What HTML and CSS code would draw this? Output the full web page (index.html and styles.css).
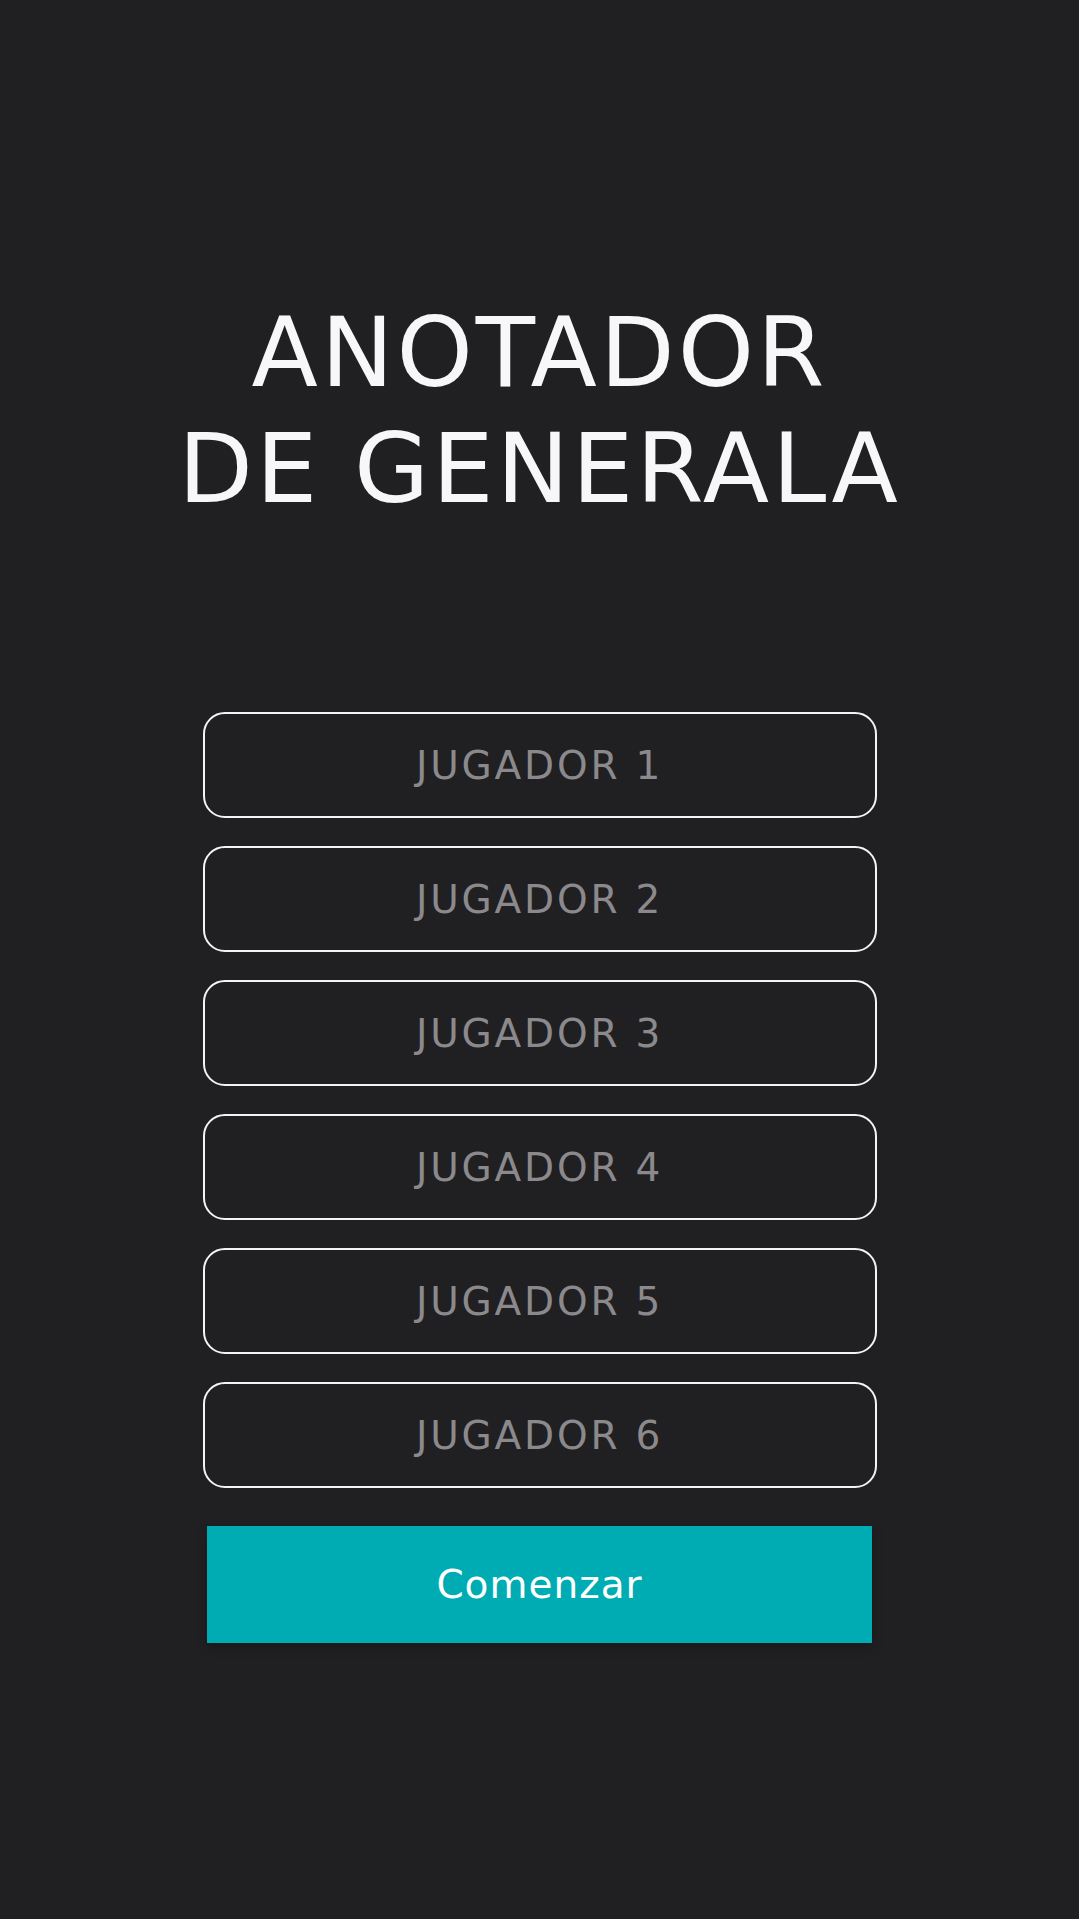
FILE: index.html
```html
<!DOCTYPE html>
<html lang="es">
<head>
    <meta charset="UTF-8">
    <title>Anotador de Generala</title>
    <link rel="stylesheet" href="styles.css">
</head>
<body>
    <div class="warp">
        <h1 class="title">ANOTADOR<br>DE GENERALA</h1>
        <form class="players">
            <input class="player" type="text" placeholder="JUGADOR 1">
            <input class="player" type="text" placeholder="JUGADOR 2">
            <input class="player" type="text" placeholder="JUGADOR 3">
            <input class="player" type="text" placeholder="JUGADOR 4">
            <input class="player" type="text" placeholder="JUGADOR 5">
            <input class="player" type="text" placeholder="JUGADOR 6">
            <button class="start" type="button">Comenzar</button>
        </form>
    </div>
</body>
</html>
```

FILE: styles.css
```css
*{margin:0;padding:0;box-sizing:border-box;}
html,body{
    height: 100%;
    background-color: #201f22;
}
body{
    font-family: 'DejaVu Sans', 'Open Sans', sans-serif;
}
.warp{
    display: flex;
    flex-direction: column;
    align-items: center;
    padding-top: 295px;
}
.title{
    color: #f7f7f9;
    font-size: 97px;
    font-weight: 400;
    line-height: 116px;
    letter-spacing: 3px;
    text-align: center;
}
.players{
    display: flex;
    flex-direction: column;
    align-items: center;
    gap: 28px;
    margin-top: 185px;
}
.player{
    width: 674px;
    height: 106px;
    border: 2px solid #f4f4f6;
    border-radius: 22px;
    background-color: transparent;
    color: #fff;
    font-family: inherit;
    font-size: 39px;
    letter-spacing: 2.8px;
    text-align: center;
    outline: none;
}
.player::placeholder{
    color: #8b898c;
}
.start{
    width: 665px;
    height: 117px;
    margin-top: 10px;
    border: none;
    background-color: #00acb4;
    box-shadow: 0 4px 10px rgba(0,0,0,.25);
    color: #fff;
    font-family: inherit;
    font-size: 39px;
    letter-spacing: 1px;
    cursor: pointer;
}
```
